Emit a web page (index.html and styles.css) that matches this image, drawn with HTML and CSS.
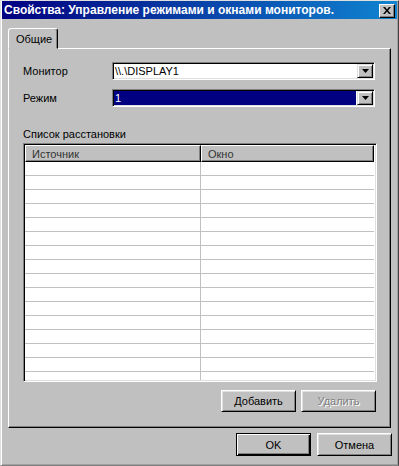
FILE: index.html
```html
<!DOCTYPE html>
<html lang="ru">
<head>
    <meta charset="UTF-8">
    <meta name="viewport" content="width=device-width, initial-scale=1.0">
    <title>Свойства: Управление режимами и окнами мониторов.</title>
    <link rel="stylesheet" href="styles.css">
</head>
<body>

<div class="window">
    <div class="titlebar">
        <span class="title">Свойства: Управление режимами и окнами мониторов.</span>
        <button class="close-btn" aria-label="Закрыть">
            <svg width="8" height="7" viewBox="0 0 8 7">
                <path d="M0 0h2l2 2.5L6 0h2L5 3.5 8 7H6L4 4.5 2 7H0l3-3.5z" fill="#000"/>
            </svg>
        </button>
    </div>

    <div class="tabs">
        <div class="tab">Общие</div>
    </div>

    <div class="panel">
        <div class="field">
            <label>Монитор</label>
            <div class="combo">
                <div class="combo-value">\\.\DISPLAY1</div>
                <div class="combo-btn">
                    <svg width="7" height="4" viewBox="0 0 7 4"><path d="M0 0h7L3.5 4z" fill="#000"/></svg>
                </div>
            </div>
        </div>

        <div class="field">
            <label>Режим</label>
            <div class="combo">
                <div class="combo-value selected">1</div>
                <div class="combo-btn">
                    <svg width="7" height="4" viewBox="0 0 7 4"><path d="M0 0h7L3.5 4z" fill="#000"/></svg>
                </div>
            </div>
        </div>

        <div class="group-label">Список расстановки</div>

        <div class="listview">
            <div class="lv-header">
                <div class="lv-col col-src">Источник</div>
                <div class="lv-col col-win">Окно</div>
            </div>
            <div class="lv-body">
                <div class="lv-row"><div class="lv-cell"></div><div class="lv-cell"></div></div>
                <div class="lv-row"><div class="lv-cell"></div><div class="lv-cell"></div></div>
                <div class="lv-row"><div class="lv-cell"></div><div class="lv-cell"></div></div>
                <div class="lv-row"><div class="lv-cell"></div><div class="lv-cell"></div></div>
                <div class="lv-row"><div class="lv-cell"></div><div class="lv-cell"></div></div>
                <div class="lv-row"><div class="lv-cell"></div><div class="lv-cell"></div></div>
                <div class="lv-row"><div class="lv-cell"></div><div class="lv-cell"></div></div>
                <div class="lv-row"><div class="lv-cell"></div><div class="lv-cell"></div></div>
                <div class="lv-row"><div class="lv-cell"></div><div class="lv-cell"></div></div>
                <div class="lv-row"><div class="lv-cell"></div><div class="lv-cell"></div></div>
                <div class="lv-row"><div class="lv-cell"></div><div class="lv-cell"></div></div>
                <div class="lv-row"><div class="lv-cell"></div><div class="lv-cell"></div></div>
                <div class="lv-row"><div class="lv-cell"></div><div class="lv-cell"></div></div>
                <div class="lv-row"><div class="lv-cell"></div><div class="lv-cell"></div></div>
                <div class="lv-row"><div class="lv-cell"></div><div class="lv-cell"></div></div>
                <div class="lv-row"><div class="lv-cell"></div><div class="lv-cell"></div></div>
            </div>
        </div>

        <div class="panel-buttons">
            <button class="btn">Добавить</button>
            <button class="btn" disabled>Удалить</button>
        </div>
    </div>

    <div class="dialog-buttons">
        <button class="btn default">OK</button>
        <button class="btn">Отмена</button>
    </div>
</div>

</body>
</html>
```

FILE: styles.css
```css
* {
    box-sizing: border-box;
}

body {
    margin: 0;
    font-family: "Liberation Sans", Arial, sans-serif;
    font-size: 11px;
    color: #000;
    background-color: #c0c0c0;
}

.window {
    width: 399px;
    height: 466px;
    background-color: #c0c0c0;
    border: 1px solid;
    border-color: #dfdfdf #404040 #808080 #dfdfdf;
    box-shadow: inset 1px 0 #fff, inset -1px -1px #a0a0a0;
    display: flex;
    flex-direction: column;
}

.titlebar {
    height: 18px;
    margin: 0 1px;
    padding: 0 2px 0 2px;
    background: linear-gradient(to right, #000080, #1084d0);
    display: flex;
    align-items: center;
    justify-content: space-between;
}

.title {
    color: #fff;
    font-weight: bold;
    font-size: 12px;
    white-space: nowrap;
}

.close-btn {
    width: 16px;
    height: 14px;
    padding: 0;
    margin-top: 1px;
    background-color: #c0c0c0;
    border: 1px solid;
    border-color: #fff #000 #000 #fff;
    box-shadow: inset -1px -1px #808080;
    display: flex;
    align-items: center;
    justify-content: center;
}

.tabs {
    display: flex;
    margin: 9px 7px 0 7px;
    position: relative;
    z-index: 1;
}

.tab {
    width: 50px;
    height: 21px;
    margin-bottom: -1px;
    padding: 4px 0 0 7px;
    background-color: #c0c0c0;
    border: 1px solid;
    border-color: #fff #000 transparent #fff;
    border-radius: 3px 3px 0 0;
    box-shadow: inset -1px 0 #808080;
}

.panel {
    height: 380px;
    margin: 0 7px;
    padding: 13px 13px 15px 14px;
    border: 1px solid;
    border-color: #fff #000 #000 #fff;
    box-shadow: inset -1px -1px #808080;
    display: flex;
    flex-direction: column;
}

.field {
    display: flex;
    align-items: center;
    height: 18px;
    margin-bottom: 9px;
}

.field label {
    width: 89px;
}

.combo {
    width: 263px;
    height: 18px;
    padding: 1px;
    background-color: #fff;
    border: 1px solid;
    border-color: #808080 #fff #fff #808080;
    box-shadow: inset 1px 1px #000, inset -1px -1px #dfdfdf;
    display: flex;
    align-items: stretch;
}

.combo-value {
    flex: 1;
    padding: 0 0 0 1px;
    line-height: 14px;
    margin-right: 1px;
}

.combo-value.selected {
    background-color: #000080;
    color: #fff;
}

.combo-btn {
    width: 16px;
    height: 14px;
    background-color: #c0c0c0;
    border: 1px solid;
    border-color: #dfdfdf #000 #000 #dfdfdf;
    box-shadow: inset 1px 1px #fff, inset -1px -1px #808080;
    display: flex;
    align-items: center;
    justify-content: center;
}

.group-label {
    margin-top: 12px;
    height: 13px;
    line-height: 13px;
    margin-bottom: 2px;
}

.listview {
    height: 239px;
    padding: 2px 2px 2px 2px;
    background-color: #fff;
    border: 1px solid;
    border-color: #808080 #fff #fff #808080;
    box-shadow: inset 1px 1px #000, inset -1px -1px #dfdfdf;
    overflow: hidden;
}

.lv-header {
    display: flex;
    height: 17px;
    margin: -1px 0 0 -1px;
}

.lv-col {
    height: 17px;
    padding: 2px 0 0 6px;
    background-color: #c0c0c0;
    color: #333;
    border: 1px solid;
    border-color: #fff #000 #000 #fff;
    box-shadow: inset -1px -1px #808080;
}

.col-src {
    width: 176px;
}

.col-win {
    width: 173px;
}

.lv-body {
    height: 218px;
    overflow: hidden;
    margin-left: -1px;
}

.lv-row {
    display: flex;
    height: 14px;
    border-bottom: 1px solid #c0c0c0;
}

.lv-cell:first-child {
    width: 176px;
    border-right: 1px solid #c0c0c0;
}

.lv-cell:last-child {
    flex: 1;
}

.panel-buttons {
    display: flex;
    justify-content: flex-end;
    gap: 5px;
    margin-top: 8px;
    padding-right: 1px;
}

.btn {
    width: 75px;
    height: 22px;
    padding: 0;
    font-family: "Liberation Sans", Arial, sans-serif;
    font-size: 11px;
    color: #000;
    background-color: #c0c0c0;
    border: 1px solid;
    border-color: #fff #000 #000 #fff;
    box-shadow: inset 1px 1px #dfdfdf, inset -1px -1px #808080;
}

.btn:disabled {
    color: #808080;
    text-shadow: 1px 1px #fff;
}

.btn.default {
    border: 1px solid #000;
    box-shadow: inset 1px 1px #fff, inset -1px -1px #000, inset -2px -2px #808080;
}

.dialog-buttons {
    display: flex;
    justify-content: flex-end;
    gap: 6px;
    margin-top: 5px;
    padding-right: 6px;
}

.dialog-buttons .btn {
    height: 23px;
}
```
